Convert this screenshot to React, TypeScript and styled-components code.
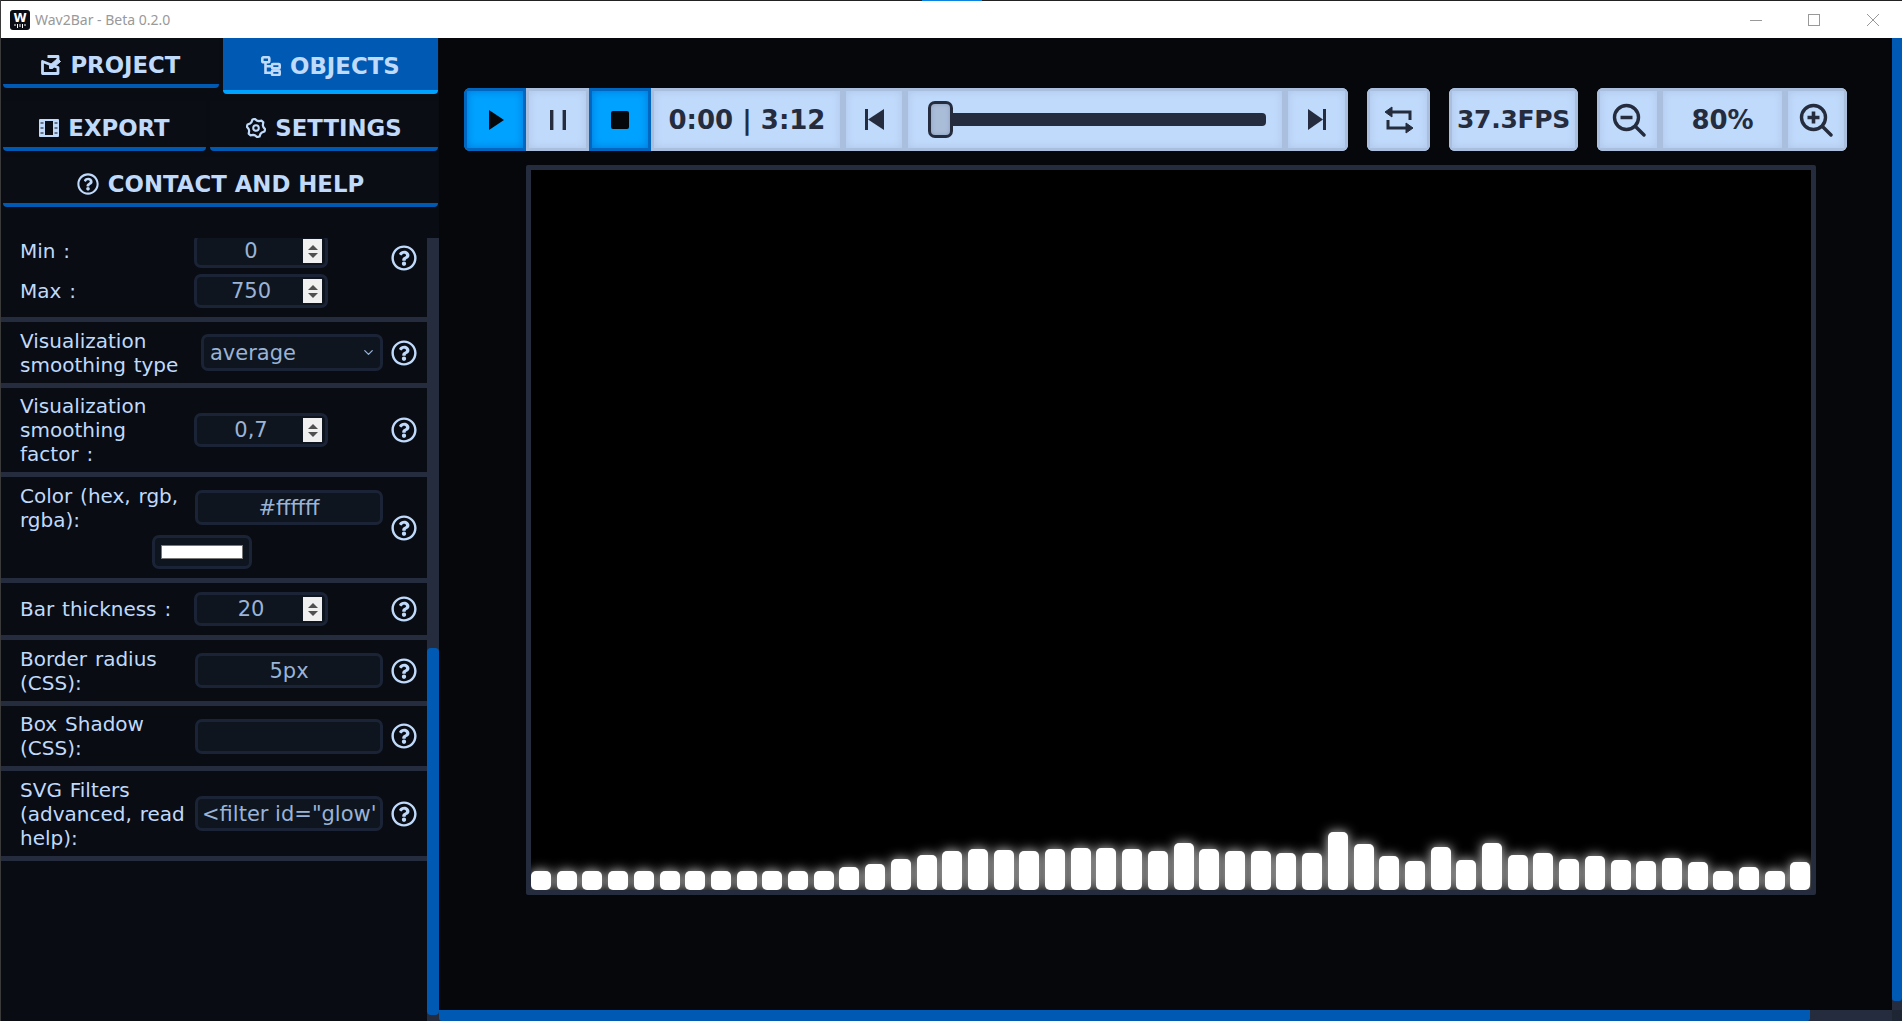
import React from 'react'
import styled, { createGlobalStyle } from 'styled-components'
import { FaRegQuestionCircle } from 'react-icons/fa'
import { ChevronDown } from 'lucide-react'

const GlobalStyle = createGlobalStyle`
    html, body {
        margin: 0;
        padding: 0;
        height: 100%;
        overflow: hidden;
        background: #05070b;
    }
    * {
        box-sizing: border-box;
    }
`

const BAR_TOPS = [
    180, 180, 180, 180, 180, 180, 180, 180, 180, 180, 180, 180, 170, 160, 146, 132, 120, 115, 118, 120, 115, 112, 112,
    115, 122, 96, 115, 120, 122, 127, 127, 65, 100, 136, 150, 110, 148, 96, 132, 127, 144, 136, 148, 150, 141, 153, 180,
    170, 180, 155,
]

const ProjectIcon = () => (
    <svg width="20" height="20" viewBox="0 0 20 20" fill="none" stroke="currentColor" strokeWidth="2.8">
        <path d="M6.5 1.5H17V5M17 12.5V18.5H1.5V6.5Z" strokeLinejoin="round" />
        <path d="M8.5 13.5L8.5 10.5L16.5 3.5L19.5 6.5L11.5 13.5Z" fill="currentColor" strokeWidth="1" />
    </svg>
)

const ObjectsIcon = () => (
    <svg width="20" height="20" viewBox="0 0 20 20" fill="none" stroke="currentColor" strokeWidth="2.6">
        <rect x="1.3" y="1.3" width="7" height="5" rx="1" />
        <rect x="11" y="8" width="7.7" height="4.4" rx="1" />
        <rect x="11" y="14.6" width="7.7" height="4.4" rx="1" />
        <path d="M4.5 6V16.8H11M4.5 10.2H11" />
    </svg>
)

const FilmIcon = () => (
    <svg width="20" height="20" viewBox="0 0 20 20">
        <rect x="0" y="1" width="20" height="18" rx="1" fill="currentColor" />
        <rect x="6" y="3" width="8" height="14" fill="#0a0d14" />
        <path d="M1.5 5H4.5M1.5 10H4.5M1.5 15H4.5M15.5 5H18.5M15.5 10H18.5M15.5 15H18.5" stroke="#0a0d14" strokeWidth="1" />
    </svg>
)

const GEAR_POINTS = Array.from({ length: 24 }, (_, i) => {
    const angle = ((i * 15 + 7.5) * Math.PI) / 180
    const r = i % 4 < 2 ? 9.2 : 7.4
    return `${(10 + r * Math.cos(angle)).toFixed(2)},${(10 + r * Math.sin(angle)).toFixed(2)}`
}).join(' ')

const GearIcon = () => (
    <svg width="20" height="20" viewBox="0 0 20 20" fill="none" stroke="currentColor">
        <polygon points={GEAR_POINTS} strokeWidth="2.2" strokeLinejoin="round" />
        <circle cx="10" cy="10" r="2.8" strokeWidth="2" />
    </svg>
)

const PlayIcon = () => (
    <svg width="18" height="20" viewBox="0 0 18 20" fill="currentColor">
        <path d="M3 0L18 10L3 20Z" />
    </svg>
)

const PauseIcon = () => (
    <svg width="18" height="20" viewBox="0 0 18 20" fill="currentColor">
        <rect x="1" y="0" width="3.4" height="20" />
        <rect x="13.6" y="0" width="3.4" height="20" />
    </svg>
)

const StopIcon = () => (
    <svg width="20" height="20" viewBox="0 0 20 20" fill="currentColor">
        <rect x="1" y="1" width="18" height="18" rx="2" />
    </svg>
)

const PrevIcon = () => (
    <svg width="19" height="21" viewBox="0 0 19 21" fill="currentColor">
        <rect x="0" y="0" width="3" height="21" />
        <path d="M19 0V21L3 10.5Z" />
    </svg>
)

const NextIcon = () => (
    <svg width="18" height="21" viewBox="0 0 18 21" fill="currentColor">
        <rect x="15" y="0" width="3" height="21" />
        <path d="M0 0V21L15 10.5Z" />
    </svg>
)

const LoopIcon = () => (
    <svg width="30" height="28" viewBox="0 0 30 28" fill="none" stroke="currentColor" strokeWidth="3">
        <path d="M5 6H26V14M25 22H4V14" />
        <path d="M1 6L8 1V11Z" fill="currentColor" strokeWidth="1" />
        <path d="M29 22L22 17V27Z" fill="currentColor" strokeWidth="1" />
    </svg>
)

const ZoomIcon = ({ plus }: { plus?: boolean }) => (
    <svg width="34" height="34" viewBox="0 0 34 34" fill="none" stroke="currentColor" strokeWidth="3.4">
        <circle cx="14.5" cy="14.5" r="12" />
        <path d="M23.5 23.5L32 32" strokeLinecap="round" />
        <path d="M8.5 14.5H20.5" strokeWidth="3.6" />
        {plus && <path d="M14.5 8.5V20.5" strokeWidth="3.6" />}
    </svg>
)

const NumberField = ({ value }: { value: string }) => (
    <NumberBox>
        <NumberInput readOnly value={value} />
        <Spinner>
            <SpinArrow />
            <SpinArrow $down />
        </Spinner>
    </NumberBox>
)

const Help = () => (
    <HelpMark>
        <FaRegQuestionCircle size={26} />
    </HelpMark>
)

export default function App() {
    return (
        <Window>
            <GlobalStyle />
            <TitleBar>
                <TopAccent />
                <Logo>
                    <svg width="20" height="20" viewBox="0 0 20 20">
                        <rect width="20" height="20" rx="3" fill="#0a0d14" />
                        <text x="10" y="11.5" fontFamily="DejaVu Sans" fontWeight="700" fontSize="12" fill="#fff" textAnchor="middle">W</text>
                        <path d="M5 14V16M7.5 14V18M10 14V17M12.5 14V18M15 14V16" stroke="#fff" strokeWidth="1" />
                    </svg>
                </Logo>
                <WindowTitle>Wav2Bar - Beta 0.2.0</WindowTitle>
                <WindowControls>
                    <WindowButton>
                        <svg width="12" height="12" viewBox="0 0 12 12" stroke="#999" fill="none"><path d="M0 6.5H12" /></svg>
                    </WindowButton>
                    <WindowButton>
                        <svg width="12" height="12" viewBox="0 0 12 12" stroke="#999" fill="none"><rect x="0.5" y="0.5" width="11" height="11" /></svg>
                    </WindowButton>
                    <WindowButton>
                        <svg width="12" height="12" viewBox="0 0 12 12" stroke="#999" fill="none"><path d="M0 0L12 12M12 0L0 12" /></svg>
                    </WindowButton>
                </WindowControls>
            </TitleBar>
            <Body>
                <Sidebar>
                    <TabArea>
                        <TabRow>
                            <Tab><ProjectIcon />PROJECT</Tab>
                            <Tab $active><ObjectsIcon />OBJECTS</Tab>
                        </TabRow>
                        <TabRow>
                            <Tab><FilmIcon />EXPORT</Tab>
                            <Tab><GearIcon />SETTINGS</Tab>
                        </TabRow>
                        <TabRow>
                            <Tab><FaRegQuestionCircle size={22} />CONTACT AND HELP</Tab>
                        </TabRow>
                    </TabArea>
                    <PanelArea>
                        <ParamList>
                            <ParamRow $pad={9}>
                                <RangeStack $hiddenTop>
                                    <Line>
                                        <ParamLabel>Min :</ParamLabel>
                                        <ControlSlot><NumberField value="0" /></ControlSlot>
                                    </Line>
                                    <Line>
                                        <ParamLabel>Max :</ParamLabel>
                                        <ControlSlot><NumberField value="750" /></ControlSlot>
                                    </Line>
                                </RangeStack>
                                <Help />
                            </ParamRow>
                            <ParamRow>
                                <ParamLabel>Visualization smoothing type</ParamLabel>
                                <ControlSlot>
                                    <SelectBox>
                                        average
                                        <ChevronDown size={15} strokeWidth={2} />
                                    </SelectBox>
                                </ControlSlot>
                                <Help />
                            </ParamRow>
                            <ParamRow $pad={6}>
                                <ParamLabel>Visualization smoothing factor :</ParamLabel>
                                <ControlSlot><NumberField value="0,7" /></ControlSlot>
                                <Help />
                            </ParamRow>
                            <ParamRow>
                                <RangeStack>
                                    <Line>
                                        <ParamLabel>Color (hex, rgb, rgba):</ParamLabel>
                                        <ControlSlot><TextField readOnly value="#ffffff" /></ControlSlot>
                                    </Line>
                                    <Swatch><SwatchColor /></Swatch>
                                </RangeStack>
                                <Help />
                            </ParamRow>
                            <ParamRow $pad={9}>
                                <ParamLabel>Bar thickness :</ParamLabel>
                                <ControlSlot><NumberField value="20" /></ControlSlot>
                                <Help />
                            </ParamRow>
                            <ParamRow>
                                <ParamLabel>Border radius (CSS):</ParamLabel>
                                <ControlSlot><TextField readOnly value="5px" /></ControlSlot>
                                <Help />
                            </ParamRow>
                            <ParamRow $pad={6}>
                                <ParamLabel>Box Shadow (CSS):</ParamLabel>
                                <ControlSlot><TextField readOnly value="" /></ControlSlot>
                                <Help />
                            </ParamRow>
                            <ParamRow>
                                <ParamLabel>SVG Filters (advanced, read help):</ParamLabel>
                                <ControlSlot><TextField $left readOnly value={'<filter id="glow" x="-50%"'} /></ControlSlot>
                                <Help />
                            </ParamRow>
                        </ParamList>
                        <PanelScroll>
                            <PanelThumb />
                        </PanelScroll>
                    </PanelArea>
                </Sidebar>
                <Main>
                    <MainView>
                        <Toolbar>
                            <ToolGroup>
                                <ToolCell $w={62} $active><PlayIcon /></ToolCell>
                                <ToolCell $w={63}><PauseIcon /></ToolCell>
                                <ToolCell $w={62} $active><StopIcon /></ToolCell>
                                <ToolCell $w={192}>0:00 | 3:12</ToolCell>
                                <ToolCell $w={62}><PrevIcon /></ToolCell>
                                <SliderCell>
                                    <SliderThumb />
                                    <SliderTrack />
                                </SliderCell>
                                <ToolCell $w={63}><NextIcon /></ToolCell>
                            </ToolGroup>
                            <ToolGroup>
                                <ToolCell $w={63}><LoopIcon /></ToolCell>
                            </ToolGroup>
                            <ToolGroup>
                                <ToolCell $w={129} $tight>37.3FPS</ToolCell>
                            </ToolGroup>
                            <ToolGroup>
                                <ToolCell $w={63}><ZoomIcon /></ToolCell>
                                <ToolCell $w={125}>80%</ToolCell>
                                <ToolCell $w={62}><ZoomIcon plus /></ToolCell>
                            </ToolGroup>
                        </Toolbar>
                        <Screen>
                            {BAR_TOPS.map((top, i) => (
                                <Bar key={i} style={{ height: (238 - top) / 3 }} />
                            ))}
                        </Screen>
                    </MainView>
                    <VerticalScroll>
                        <ScrollThumb />
                    </VerticalScroll>
                    <HorizontalScroll>
                        <ScrollThumb />
                    </HorizontalScroll>
                    <ScrollCorner />
                </Main>
            </Body>
        </Window>
    )
}

const Window = styled.div`
    height: 100vh;
    display: flex;
    flex-direction: column;
    font-family: "DejaVu Sans", sans-serif;
    color: #c0dafc;
    border-left: 1px solid #3a3a3a;
`
const TitleBar = styled.div`
    position: relative;
    height: 38px;
    flex: none;
    display: flex;
    align-items: center;
    background: #fff;
    border-top: 1px solid #222;
    padding-left: 9px;
`
const TopAccent = styled.div`
    position: absolute;
    top: -1px;
    left: 50%;
    width: 60px;
    height: 1px;
    margin-left: -30px;
    background: #0a84e0;
`
const Logo = styled.div`
    width: 20px;
    height: 20px;
    display: flex;
`
const WindowTitle = styled.div`
    margin-left: 5px;
    font-family: "Noto Sans", sans-serif;
    font-size: 14px;
    color: #999;
`
const WindowControls = styled.div`
    margin-left: auto;
    display: flex;
`
const WindowButton = styled.div`
    width: 58.5px;
    height: 37px;
    display: flex;
    align-items: center;
    justify-content: center;
`
const Body = styled.div`
    flex: 1;
    min-height: 0;
    display: flex;
`
const Sidebar = styled.aside`
    width: 438px;
    flex: none;
    display: flex;
    flex-direction: column;
    background: #090c13;
`
const TabArea = styled.nav`
    height: 200px;
    flex: none;
    padding: 0 1px 0 2px;
    display: flex;
    flex-direction: column;
    gap: 6px;
`
const TabRow = styled.div`
    display: flex;
    gap: 4px;
    align-items: flex-start;
    &:first-child {
        margin-bottom: 1px;
    }
`
const Tab = styled.button<{ $active?: boolean }>`
    flex: 1 1 auto;
    height: ${(p) => (p.$active ? '56px' : '50px')};
    padding: 8px 0 ${(p) => (p.$active ? '5px' : '0')};
    display: flex;
    align-items: center;
    justify-content: center;
    gap: 9px;
    background: ${(p) => (p.$active ? '#005ab3' : '#0a0d14')};
    border: none;
    border-bottom: 4px solid ${(p) => (p.$active ? '#00a2ff' : '#005ab3')};
    border-radius: 0 0 4px 4px;
    color: #c0dafc;
    font-family: "DejaVu Sans", sans-serif;
    font-weight: 700;
    font-size: 22.8px;
`
const PanelArea = styled.div`
    flex: 1;
    min-height: 0;
    display: flex;
`
const ParamList = styled.div`
    flex: 1;
    min-width: 0;
    overflow: hidden;
    & > :first-child {
        margin-top: -39px;
    }
`
const PanelScroll = styled.div`
    width: 12px;
    flex: none;
    padding: 410px 0 6px;
    background: #252c3d;
`
const PanelThumb = styled.div`
    height: 100%;
    background: #005ab3;
    border-radius: 4px;
`
const ParamRow = styled.div<{ $pad?: number }>`
    display: flex;
    align-items: center;
    padding: ${(p) => p.$pad ?? 6.5}px 9px ${(p) => p.$pad ?? 6.5}px 19px;
    border-bottom: 5px solid #252c3d;
`
const RangeStack = styled.div<{ $hiddenTop?: boolean }>`
    width: 363px;
    flex: none;
    padding-top: ${(p) => (p.$hiddenTop ? '26px' : '0')};
    display: flex;
    flex-direction: column;
    gap: 6px;
`
const Line = styled.div`
    display: flex;
    align-items: center;
`
const ParamLabel = styled.div`
    width: 174px;
    flex: none;
    padding-right: 4px;
    font-size: 20px;
    word-spacing: 1.5px;
    line-height: 24px;
`
const ControlSlot = styled.div`
    width: 189px;
    flex: none;
    display: flex;
`
const NumberBox = styled.div`
    width: 134px;
    height: 34px;
    display: flex;
    align-items: center;
    background: #0e151f;
    border: 3px solid #1b2436;
    border-radius: 7px;
`
const NumberInput = styled.input`
    flex: 1;
    min-width: 0;
    height: 100%;
    padding: 0 0 0 2px;
    background: transparent;
    border: none;
    outline: none;
    text-align: center;
    color: #9ab3d6;
    font-family: inherit;
    font-size: 21px;
`
const Spinner = styled.div`
    width: 19px;
    height: 24px;
    margin-right: 3px;
    flex: none;
    display: flex;
    flex-direction: column;
    align-items: center;
    justify-content: center;
    gap: 3px;
    background: #f0f0f0;
`
const SpinArrow = styled.span<{ $down?: boolean }>`
    width: 0;
    height: 0;
    border-left: 5px solid transparent;
    border-right: 5px solid transparent;
    border-bottom: ${(p) => (p.$down ? 'none' : '5px solid #505050')};
    border-top: ${(p) => (p.$down ? '5px solid #505050' : 'none')};
`
const TextField = styled.input<{ $left?: boolean }>`
    width: 188px;
    height: 35px;
    margin-left: 1px;
    padding: 0 ${(p) => (p.$left ? '4px' : '0')};
    background: #0e151f;
    border: 3px solid #1b2436;
    border-radius: 7px;
    outline: none;
    text-align: ${(p) => (p.$left ? 'left' : 'center')};
    color: #9ab3d6;
    font-family: inherit;
    font-size: 21px;
`
const SelectBox = styled.div`
    width: 182px;
    height: 37px;
    margin-left: 7px;
    padding: 0 4px 0 6px;
    display: flex;
    align-items: center;
    justify-content: space-between;
    background: #0e151f;
    border: 3px solid #1b2436;
    border-radius: 7px;
    color: #9ab3d6;
    font-size: 21px;
`
const Swatch = styled.div`
    align-self: center;
    width: 100px;
    height: 34px;
    margin: -3px 0 3px;
    padding: 7px 6px;
    background: #0e151f;
    border: 3px solid #1b2436;
    border-radius: 7px;
    display: flex;
`
const SwatchColor = styled.div`
    flex: 1;
    background: #fff;
    border: 1px solid #777;
`
const HelpMark = styled.div`
    width: 26px;
    height: 26px;
    margin-left: 8px;
    flex: none;
    display: flex;
    color: #c0dafc;
`
const Main = styled.main`
    flex: 1;
    min-width: 0;
    display: grid;
    grid-template-columns: 1fr 10px;
    grid-template-rows: 1fr 11px;
    background: #05070b;
`
const MainView = styled.div`
    min-width: 0;
    overflow: hidden;
    padding: 50px 0 0 25px;
`
const VerticalScroll = styled.div`
    display: flex;
    padding-bottom: 9px;
    background: #252c3d;
`
const HorizontalScroll = styled.div`
    display: flex;
    padding-right: 82px;
    background: #252c3d;
`
const ScrollThumb = styled.div`
    flex: 1;
    background: #005ab3;
    border-radius: 0 0 3px 3px;
`
const ScrollCorner = styled.div`
    background: #1e2533;
`
const Toolbar = styled.div`
    display: flex;
    gap: 19px;
`
const ToolGroup = styled.div`
    height: 63px;
    display: flex;
    border-radius: 6px;
    overflow: hidden;
`
const ToolCell = styled.div<{ $w: number; $active?: boolean; $tight?: boolean }>`
    width: ${(p) => p.$w}px;
    display: flex;
    align-items: center;
    justify-content: center;
    background: ${(p) => (p.$active ? '#00a2ff' : '#c0dafc')};
    border: 3px solid ${(p) => (p.$active ? '#0066c0' : '#a9bfdd')};
    box-shadow: inset 0 0 8px ${(p) => (p.$active ? '#0078d8' : '#aec6e8')};
    color: ${(p) => (p.$active ? '#05070b' : '#252c3d')};
    font-weight: 700;
    font-size: ${(p) => (p.$tight ? '25px' : '26px')};
    letter-spacing: ${(p) => (p.$tight ? '-0.3px' : '0')};
`
const SliderCell = styled.div`
    width: 380px;
    padding: 0 16px 0 20px;
    display: flex;
    align-items: center;
    background: #c0dafc;
    border: 3px solid #a9bfdd;
    box-shadow: inset 0 0 8px #aec6e8;
`
const SliderThumb = styled.div`
    width: 25px;
    height: 37px;
    flex: none;
    background: #a9bcd8;
    border: 3px solid #252c3d;
    border-radius: 7px;
    box-shadow: inset 0 0 4px #8c9dba;
`
const SliderTrack = styled.div`
    flex: 1;
    height: 13px;
    background: #252c3d;
    border-radius: 0 4px 4px 0;
`
const Screen = styled.div`
    width: 1290px;
    height: 730px;
    margin: 14px 0 0 62px;
    display: flex;
    align-items: flex-end;
    justify-content: space-between;
    background: #000;
    border: 5px solid #252c3d;
    border-radius: 2px;
    overflow: hidden;
`
const Bar = styled.div`
    width: 20px;
    background: #fff;
    border-radius: 5px;
    box-shadow: 0 0 12px rgba(255, 255, 255, 0.85);
`
